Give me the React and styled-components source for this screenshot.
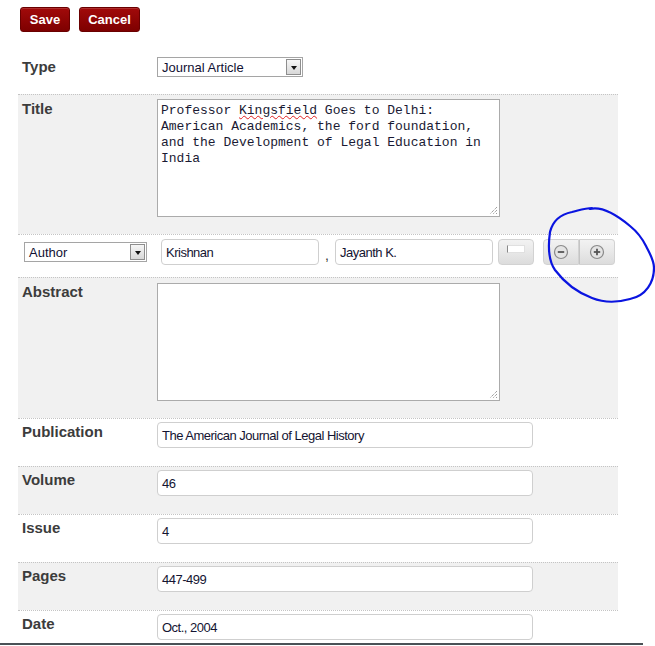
import React from 'react';
import styled, { createGlobalStyle } from 'styled-components';

const Global = createGlobalStyle`
  body {
    margin: 0;
    background: #ffffff;
    font-family: "Liberation Sans", Arial, sans-serif;
  }
`;

const Page = styled.div`
  position: relative;
  width: 655px;
  height: 646px;
  overflow: hidden;
`;

const Toolbar = styled.div`
  display: flex;
  gap: 9px;
  padding: 7px 0 0 20px;
  height: 44px;
  box-sizing: border-box;
`;

const RedButton = styled.button`
  height: 25px;
  width: ${p => p.w}px;
  border: 1px solid #6a0000;
  border-radius: 3px;
  background: linear-gradient(#a10a0a, #7e0000);
  color: #ffffff;
  font-family: "Liberation Sans", Arial, sans-serif;
  font-weight: bold;
  font-size: 13px;
  padding: 0;
  box-shadow: inset 0 1px 0 rgba(255, 255, 255, 0.15);
`;

const Form = styled.div`
  width: 600px;
  margin-left: 18px;
`;

const Row = styled.div`
  display: flex;
  align-items: ${p => (p.center ? 'center' : 'flex-start')};
  height: ${p => p.h}px;
  box-sizing: border-box;
  padding: ${p => p.pt || 0}px 0 ${p => p.pb || 0}px ${p => p.pl || 4}px;
  background: ${p => (p.shaded ? '#f1f1f1' : '#ffffff')};
  border-top: ${p => (p.first ? 'none' : '1px dotted #c4c4c4')};
`;

const Label = styled.div`
  width: 135px;
  flex-shrink: 0;
  font-weight: bold;
  font-size: 15px;
  line-height: 18px;
  color: #3c3c3c;
  padding-top: ${p => p.pt || 0}px;
`;

const SelectBox = styled.div`
  display: flex;
  align-items: center;
  justify-content: space-between;
  width: ${p => p.w}px;
  height: 20px;
  box-sizing: border-box;
  border: 1px solid #a5a5a5;
  background: #ffffff;
  padding: 0 1px 0 4px;
  font-size: 13px;
  color: #111133;
`;

const Arrow = styled.div`
  width: 15px;
  height: 16px;
  box-sizing: border-box;
  border: 1px solid #8e8e8e;
  background: linear-gradient(#f6f6f6, #d8d8d8);
  display: flex;
  align-items: center;
  justify-content: center;
  &::after {
    content: '';
    border-left: 3.5px solid transparent;
    border-right: 3.5px solid transparent;
    border-top: 4px solid #111;
    margin-top: 1px;
  }
`;

const Area = styled.div`
  position: relative;
  width: 343px;
  height: 118px;
  box-sizing: border-box;
  border: 1px solid #ababab;
  background: #ffffff;
  padding: 3px 3px;
  font-family: "Liberation Mono", "Courier New", monospace;
  font-size: 13px;
  line-height: 16px;
  color: #1a1a33;
`;

const Line = styled.div`
  white-space: pre;
`;

const Misspelled = styled.span`
  text-decoration: underline wavy #e02020;
  text-decoration-thickness: 1px;
  text-underline-offset: 1px;
`;

const Grip = styled.svg`
  position: absolute;
  right: 1px;
  bottom: 1px;
`;

const Input = styled.div`
  width: ${p => p.w}px;
  height: 26px;
  box-sizing: border-box;
  border: 1px solid #cfcfcf;
  border-radius: 4px;
  background: #ffffff;
  padding: 1px 4px 0;
  display: flex;
  align-items: center;
  font-size: 13px;
  letter-spacing: -0.5px;
  color: #141432;
`;

const Comma = styled.span`
  width: 16px;
  text-align: center;
  font-size: 14px;
  color: #333;
  align-self: center;
  padding-top: 6px;
`;

const GrayButton = styled.div`
  width: ${p => p.w}px;
  height: 26px;
  box-sizing: border-box;
  border: 1px solid #d2d2d2;
  border-radius: ${p => p.radius || '4px'};
  background: linear-gradient(#f2f2f2 0%, #e8e8e8 50%, #dcdcdc 100%);
  display: flex;
  align-items: center;
  justify-content: center;
`;

const Chip = styled.div`
  width: 16px;
  height: 6px;
  margin-top: -7px;
  background: #ffffff;
  border: 1px solid #e0e0e0;
  border-left: 1px solid #888;
`;

const Group = styled.div`
  display: flex;
  margin-left: 9px;
`;

const BottomLine = styled.div`
  position: absolute;
  left: 0;
  top: 643px;
  width: 643px;
  height: 2px;
  background: #4a5156;
`;

const Scribble = styled.svg`
  position: absolute;
  left: 540px;
  top: 202px;
  pointer-events: none;
`;

function ResizeGrip() {
  return (
    <Grip width="10" height="10" viewBox="0 0 10 10">
      <path d="M9 2 L2 9 M9 5 L5 9 M9 8 L8 9" stroke="#777" strokeWidth="1" strokeDasharray="1 1" />
    </Grip>
  );
}

function CircleIcon({ plus }) {
  return (
    <svg width="16" height="16" viewBox="0 0 16 16">
      <circle cx="8" cy="8" r="6.5" fill="#e4e4e4" stroke="#8a8a8a" strokeWidth="1.2" />
      <path d="M4.8 8 H11.2" stroke="#555" strokeWidth="1.8" />
      {plus && <path d="M8 4.8 V11.2" stroke="#555" strokeWidth="1.8" />}
    </svg>
  );
}

function Field({ label, value, shaded }) {
  return (
    <Row h={48} pt={3} shaded={shaded}>
      <Label pt={1}>{label}</Label>
      <Input w={376}>{value}</Input>
    </Row>
  );
}

export default function App() {
  return (
    <Page>
      <Global />
      <Toolbar>
        <RedButton w={50}>Save</RedButton>
        <RedButton w={61}>Cancel</RedButton>
      </Toolbar>
      <Form>
        <Row h={50} pt={13} first>
          <Label pt={1}>Type</Label>
          <SelectBox w={146}>
            Journal Article
            <Arrow />
          </SelectBox>
        </Row>
        <Row h={140} pt={4} shaded>
          <Label pt={1}>Title</Label>
          <Area>
            <Line>
              <span>Professor </span>
              <Misspelled>Kingsfield</Misspelled>
              <span> Goes to Delhi:</span>
            </Line>
            <Line>American Academics, the ford foundation,</Line>
            <Line>and the Development of Legal Education in</Line>
            <Line>India</Line>
            <ResizeGrip />
          </Area>
        </Row>
        <Row h={43} pl={6} pb={8} center>
          <SelectBox w={123}>
            Author
            <Arrow />
          </SelectBox>
          <Input w={158} style={{ marginLeft: 14 }}>Krishnan</Input>
          <Comma>,</Comma>
          <Input w={158}>Jayanth K.</Input>
          <GrayButton w={36} style={{ marginLeft: 5 }}>
            <Chip />
          </GrayButton>
          <Group>
            <GrayButton w={36} radius="4px 0 0 4px">
              <CircleIcon />
            </GrayButton>
            <GrayButton w={36} radius="0 4px 4px 0" style={{ borderLeftColor: '#c4c4c4' }}>
              <CircleIcon plus />
            </GrayButton>
          </Group>
        </Row>
        <Row h={141} pt={5} shaded>
          <Label pt={0}>Abstract</Label>
          <Area>
            <ResizeGrip />
          </Area>
        </Row>
        <Field label="Publication" value="The American Journal of Legal History" />
        <Field label="Volume" value="46" shaded />
        <Field label="Issue" value="4" />
        <Field label="Pages" value="447-499" shaded />
        <Field label="Date" value="Oct., 2004" />
      </Form>
      <BottomLine />
      <Scribble width="115" height="105" viewBox="0 0 115 105">
        <path
          d="M50 7 C62 4 78 14 90 24 C100 32 104 40 106 44 C110 52 114 58 114 66 C114 80 106 94 90 97 C76 101 62 100 52 96 C36 90 24 80 15 68 C8 58 8 44 10 30 C13 18 22 12 32 10 C40 8 46 6 52 6"
          fill="none"
          stroke="#0a14e0"
          strokeWidth="2.2"
          strokeLinecap="round"
        />
      </Scribble>
    </Page>
  );
}
